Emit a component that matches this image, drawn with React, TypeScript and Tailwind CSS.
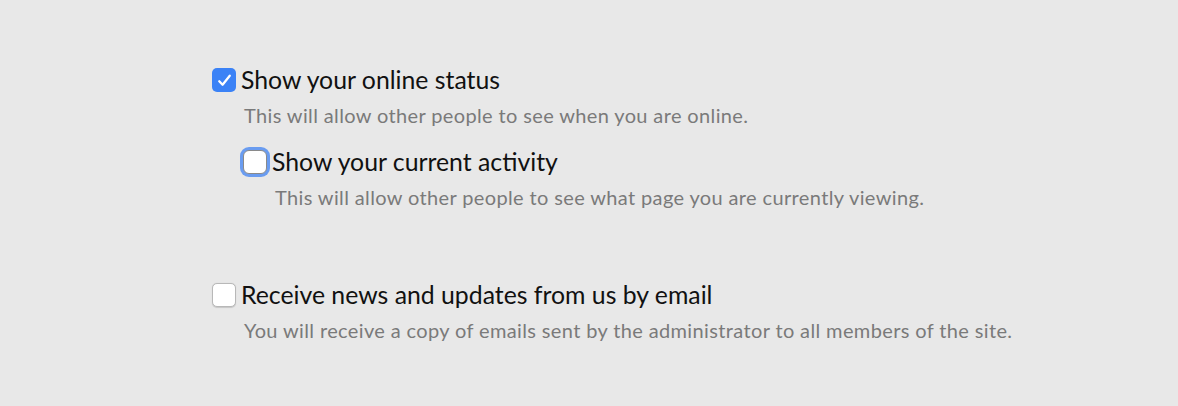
import React from "react";

function Box({ state }: { state: "checked" | "focused" | "empty" }) {
  if (state === "checked") {
    return (
      <span className="flex h-6 w-6 shrink-0 items-center justify-center rounded-[5px] bg-[#3b82f6]">
        <svg viewBox="0 0 24 24" className="h-[21px] w-[21px]" fill="none" stroke="white" strokeWidth="2.6" strokeLinecap="round" strokeLinejoin="round">
          <path d="M6 12.8l3.8 4L18 6.5" />
        </svg>
      </span>
    );
  }
  if (state === "focused") {
    return (
      <span className="block h-6 w-6 shrink-0 rounded-[6px] border border-[#8a8a8a] bg-white ring-[3px] ring-[#6a9cf0]" />
    );
  }
  return <span className="block h-6 w-6 shrink-0 rounded-[5px] border border-[#b8b8b8] bg-white shadow-[0_0.5px_1px_rgba(0,0,0,0.15)]" />;
}

function Option({ state, label, hint }: { state: "checked" | "focused" | "empty"; label: string; hint: string }) {
  return (
    <div className="flex flex-col">
      <label className="flex items-center gap-[5px]">
        <Box state={state} />
        <span className="text-[24.8px] leading-[30px] text-[#111]">{label}</span>
      </label>
      <p className="ml-[32px] mt-[8px] text-[20px] leading-[24px] tracking-[0.37px] text-[#7a7a7a]">{hint}</p>
    </div>
  );
}

export default function App() {
  return (
    <div className="min-h-[406px] w-full bg-[#e8e8e8] pl-[212px] pt-[65px]" style={{ fontFamily: "Lato, 'Noto Sans', sans-serif" }}>
      <Option state="checked" label="Show your online status" hint="This will allow other people to see when you are online." />
      <div className="ml-[31px] mt-[20px]">
        <Option state="focused" label="Show your current activity" hint="This will allow other people to see what page you are currently viewing." />
      </div>
      <div className="mt-[71px]">
        <Option state="empty" label="Receive news and updates from us by email" hint="You will receive a copy of emails sent by the administrator to all members of the site." />
      </div>
    </div>
  );
}
